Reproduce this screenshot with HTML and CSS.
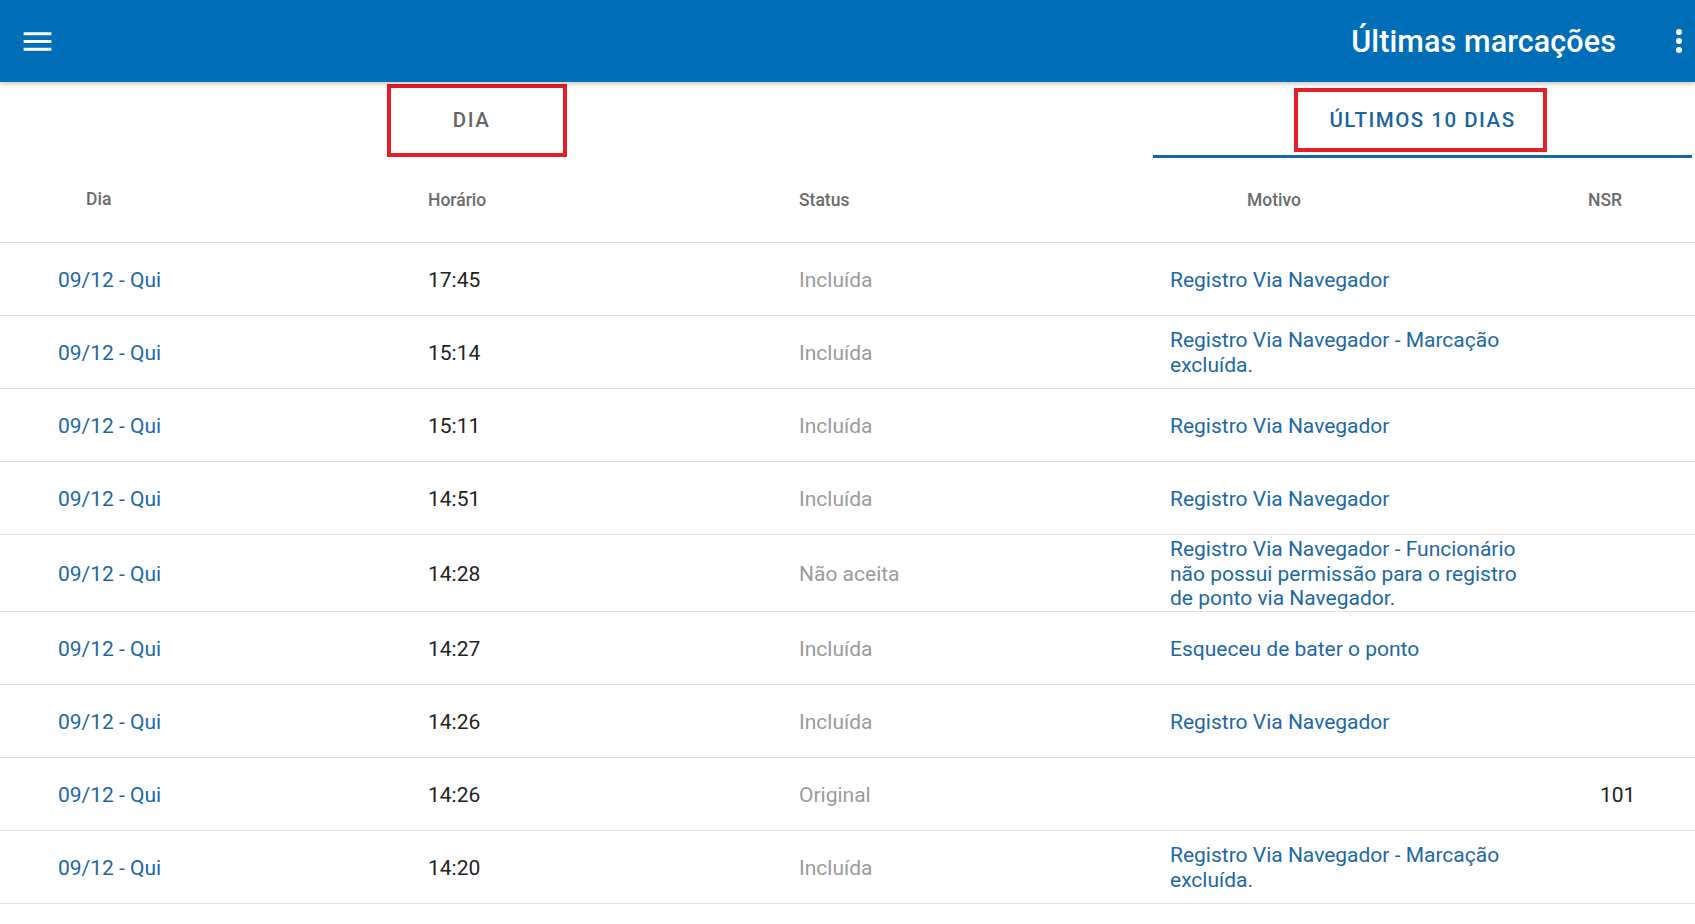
FILE: index.html
```html
<!DOCTYPE html>
<html lang="pt-BR">
<head>
<meta charset="utf-8">
<title>Últimas marcações</title>
<link rel="stylesheet" href="styles.css">
</head>
<body>
<header class="appbar">
  <button class="icon-btn menu-btn" aria-label="Menu">
    <svg class="menu-icon" viewBox="0 0 24 24" width="37" height="37"><path fill="#fff" d="M3 18h18v-2H3v2zm0-5h18v-2H3v2zm0-7v2h18V6H3z"/></svg>
  </button>
  <h1 class="title">Últimas marcações</h1>
  <button class="icon-btn more-btn" aria-label="Mais">
    <svg viewBox="0 0 10 36" width="10" height="36"><circle cx="5" cy="9" r="3" fill="#fff"/><circle cx="5" cy="18" r="3" fill="#fff"/><circle cx="5" cy="27" r="3" fill="#fff"/></svg>
  </button>
</header>

<nav class="tabs">
  <div class="tab tab-dia">
    <span class="tab-label">DIA</span>
    <span class="mark mark-dia"></span>
  </div>
  <div class="tab tab-active tab-ultimos">
    <span class="tab-label">ÚLTIMOS 10 DIAS</span>
    <span class="mark mark-ultimos"></span>
  </div>
</nav>

<section class="table">
  <div class="row head">
    <div class="cell h-dia">Dia</div>
    <div class="cell">Horário</div>
    <div class="cell">Status</div>
    <div class="cell h-motivo">Motivo</div>
    <div class="cell h-nsr">NSR</div>
  </div>

  <div class="row">
    <div class="cell dia">09/12 - Qui</div>
    <div class="cell hora">17:45</div>
    <div class="cell status">Incluída</div>
    <div class="cell motivo">Registro Via Navegador</div>
    <div class="cell nsr"></div>
  </div>
  <div class="row">
    <div class="cell dia">09/12 - Qui</div>
    <div class="cell hora">15:14</div>
    <div class="cell status">Incluída</div>
    <div class="cell motivo">Registro Via Navegador - Marcação excluída.</div>
    <div class="cell nsr"></div>
  </div>
  <div class="row">
    <div class="cell dia">09/12 - Qui</div>
    <div class="cell hora">15:11</div>
    <div class="cell status">Incluída</div>
    <div class="cell motivo">Registro Via Navegador</div>
    <div class="cell nsr"></div>
  </div>
  <div class="row">
    <div class="cell dia">09/12 - Qui</div>
    <div class="cell hora">14:51</div>
    <div class="cell status">Incluída</div>
    <div class="cell motivo">Registro Via Navegador</div>
    <div class="cell nsr"></div>
  </div>
  <div class="row">
    <div class="cell dia">09/12 - Qui</div>
    <div class="cell hora">14:28</div>
    <div class="cell status">Não aceita</div>
    <div class="cell motivo">Registro Via Navegador - Funcionário não possui permissão para o registro de ponto via Navegador.</div>
    <div class="cell nsr"></div>
  </div>
  <div class="row">
    <div class="cell dia">09/12 - Qui</div>
    <div class="cell hora">14:27</div>
    <div class="cell status">Incluída</div>
    <div class="cell motivo">Esqueceu de bater o ponto</div>
    <div class="cell nsr"></div>
  </div>
  <div class="row">
    <div class="cell dia">09/12 - Qui</div>
    <div class="cell hora">14:26</div>
    <div class="cell status">Incluída</div>
    <div class="cell motivo">Registro Via Navegador</div>
    <div class="cell nsr"></div>
  </div>
  <div class="row">
    <div class="cell dia">09/12 - Qui</div>
    <div class="cell hora">14:26</div>
    <div class="cell status">Original</div>
    <div class="cell motivo"></div>
    <div class="cell nsr">101</div>
  </div>
  <div class="row">
    <div class="cell dia">09/12 - Qui</div>
    <div class="cell hora">14:20</div>
    <div class="cell status">Incluída</div>
    <div class="cell motivo">Registro Via Navegador - Marcação excluída.</div>
    <div class="cell nsr"></div>
  </div>
</section>
</body>
</html>
```

FILE: styles.css
```css
* { box-sizing: border-box; }

html, body {
  margin: 0;
  padding: 0;
  background: #fff;
  font-family: Roboto, "Noto Sans", "Liberation Sans", sans-serif;
  overflow: hidden;
}

.appbar {
  position: relative;
  z-index: 2;
  height: 82px;
  background: #006db7;
  display: flex;
  align-items: center;
  padding: 0 11px 0 19px;
  box-shadow: 0 2px 5px rgba(0, 0, 0, 0.22);
}

.icon-btn {
  border: 0;
  background: transparent;
  padding: 0;
  margin: 0;
  display: flex;
  align-items: center;
  justify-content: center;
  cursor: pointer;
}

.title {
  margin: 0 58px 0 auto;
  color: #fff;
  font-size: 30.5px;
  font-weight: 500;
  letter-spacing: 0.1px;
}

.tabs {
  display: flex;
  height: 76px;
  padding-left: 202px;
  gap: 412px;
}

.tab {
  position: relative;
  width: 539px;
  display: flex;
  align-items: center;
  justify-content: center;
  font-size: 20.5px;
  font-weight: 500;
  letter-spacing: 1.5px;
  color: #666;
  border-bottom: 3px solid transparent;
  padding-top: 3px;
}

.tab-active {
  color: #1b65a0;
  border-bottom-color: #1b65a0;
}

.mark {
  position: absolute;
  border: 4px solid #e51f29;
}

.mark-dia {
  left: 185px;
  top: 2px;
  width: 180px;
  height: 73px;
}

.mark-ultimos {
  left: 141px;
  top: 6px;
  width: 253px;
  height: 64px;
}

.row {
  display: grid;
  grid-template-columns: 428px 371px 371px 371px 1fr;
  align-items: center;
  min-height: 73px;
  border-bottom: 1px solid #e0e0e0;
}

.row.head {
  min-height: 85px;
  font-size: 17.5px;
  font-weight: 500;
  color: #6b6b6b;
}

.cell {
  padding: 2px 0 0;
}

.row.head .cell {
  padding: 0;
}

.row.head .h-dia { padding: 0 0 3px 86px; }
.row.head .h-motivo { padding-left: 77px; }
.row.head .h-nsr { padding-left: 47px; }

.dia {
  color: #1c68a6;
  font-size: 21px;
}

.cell.dia { padding-left: 58px; }

.hora {
  color: #222;
  font-size: 21px;
}

.status {
  color: #9b9b9b;
  font-size: 21px;
}

.motivo {
  color: #1c68a6;
  font-size: 21px;
  line-height: 24.7px;
}

.cell.motivo { padding-right: 15px; }

.nsr {
  color: #222;
  font-size: 21px;
}

.cell.nsr { padding-left: 59px; }
```
